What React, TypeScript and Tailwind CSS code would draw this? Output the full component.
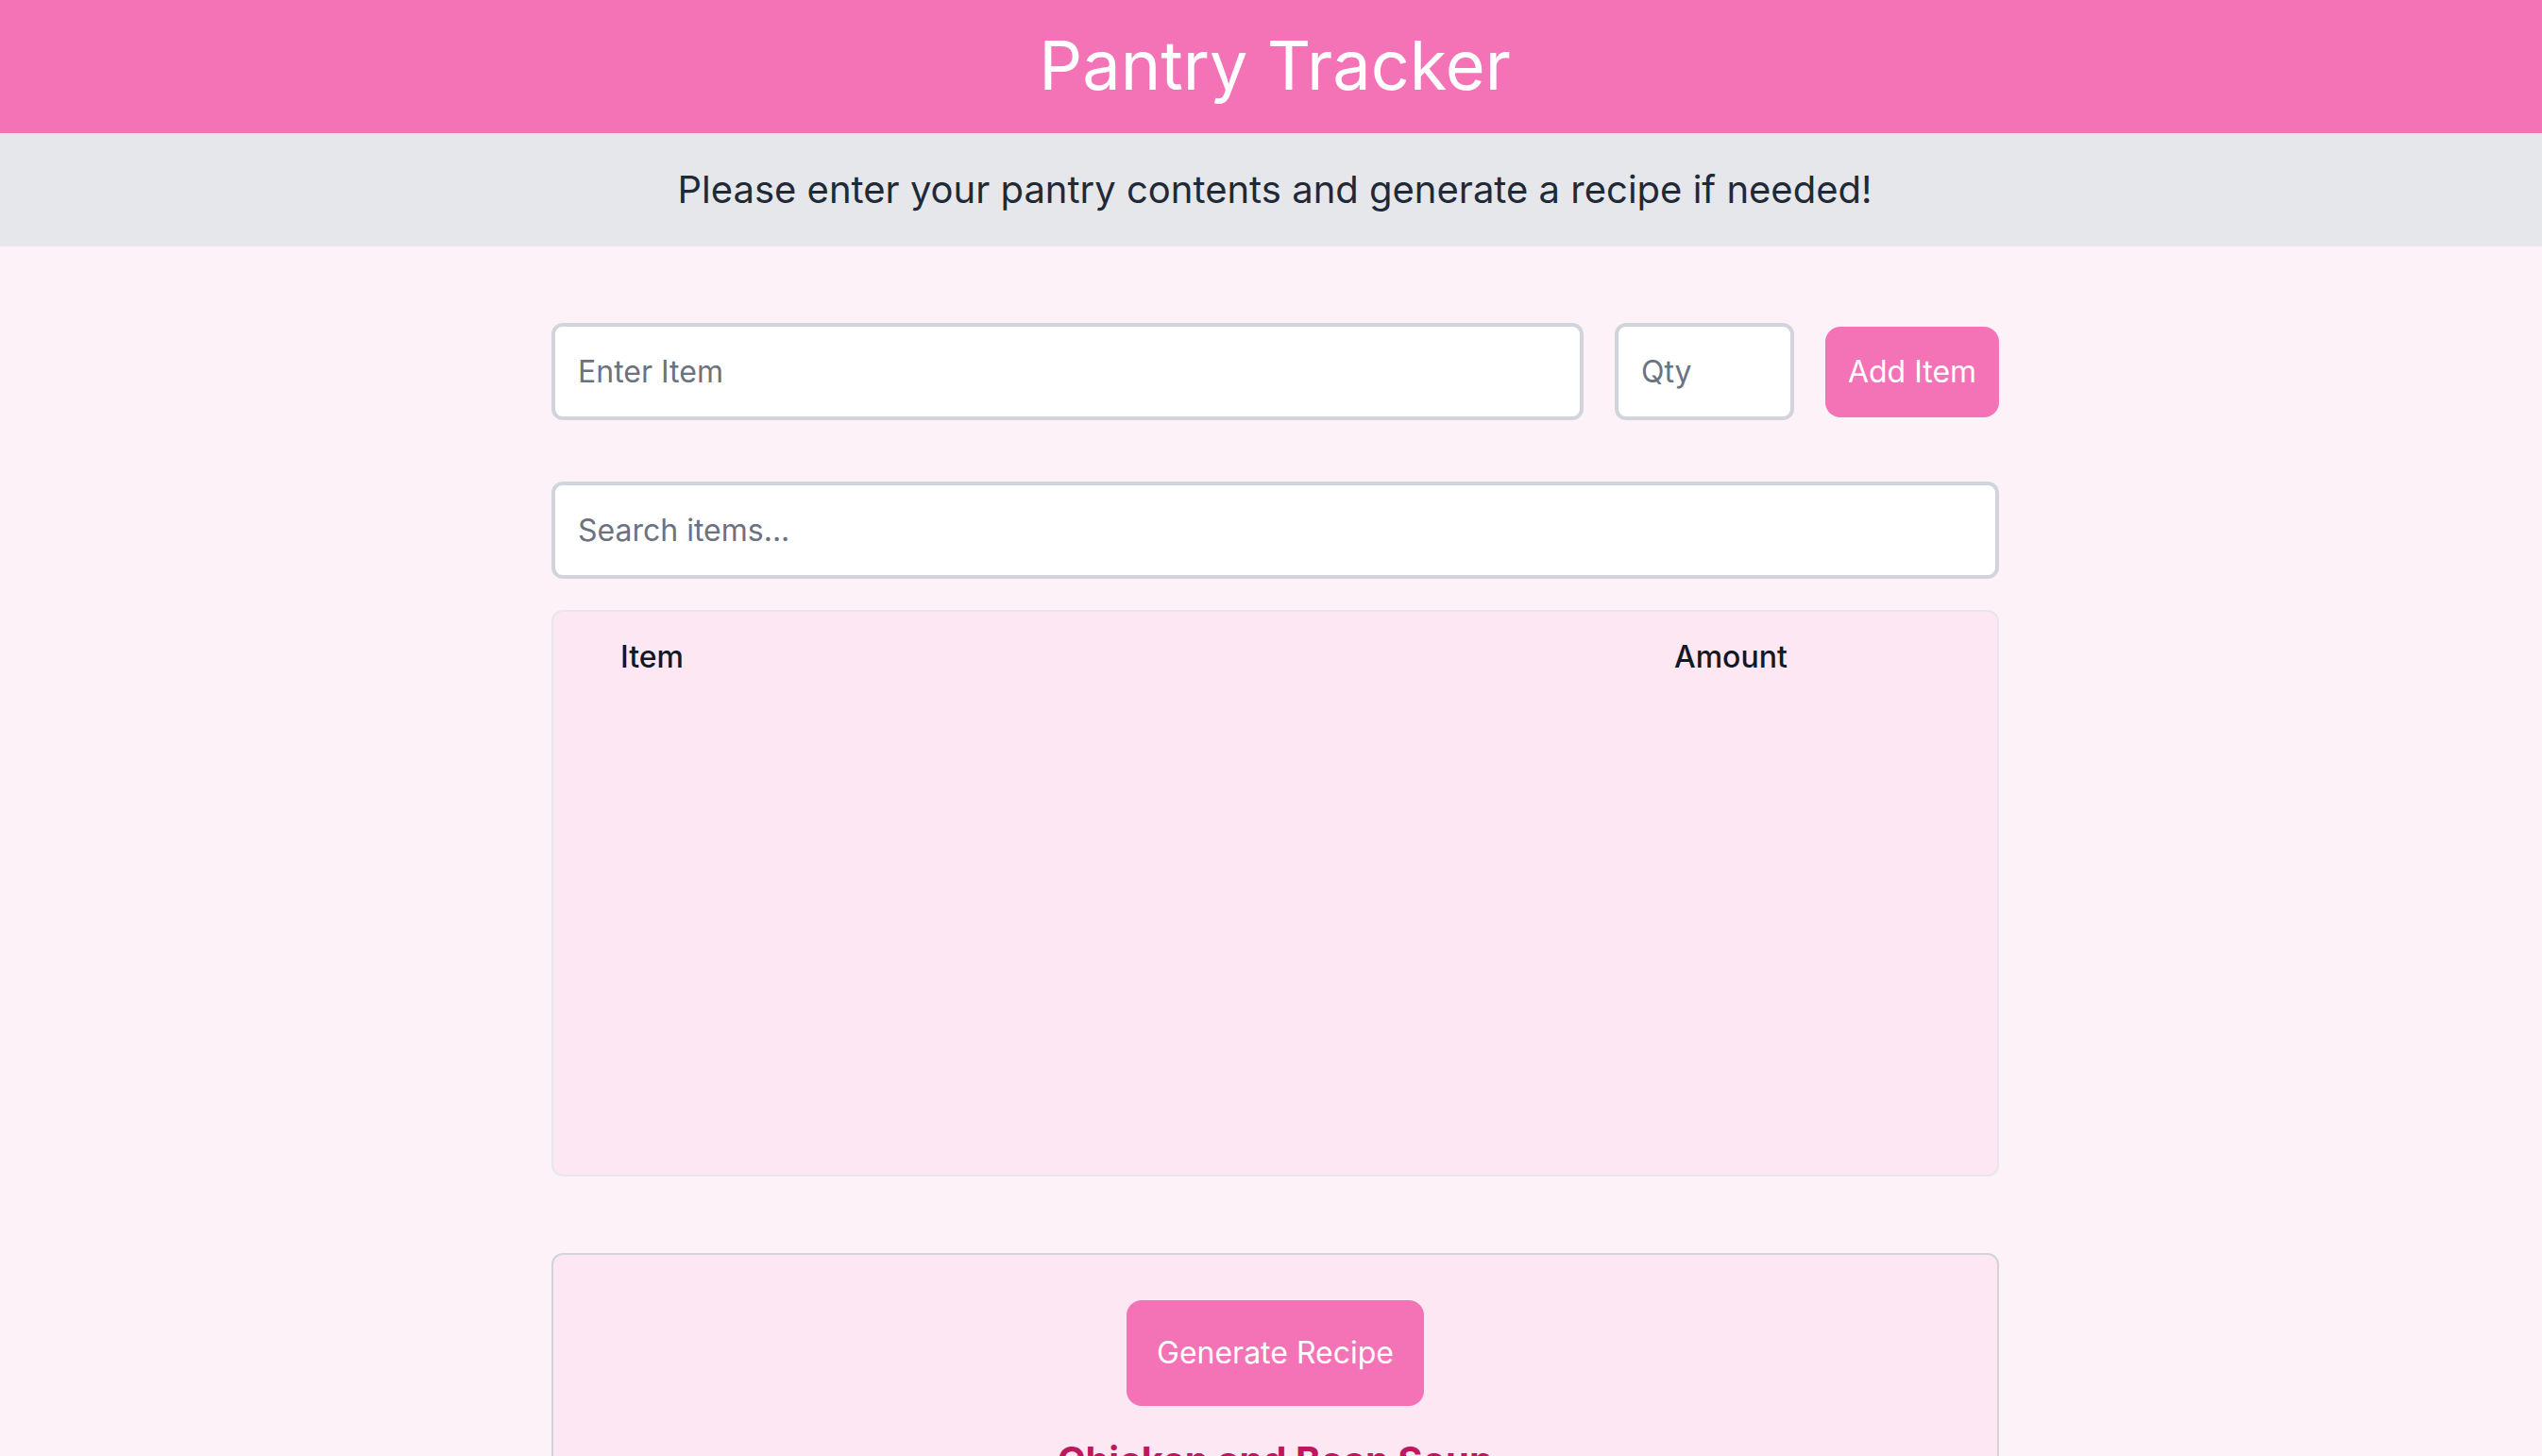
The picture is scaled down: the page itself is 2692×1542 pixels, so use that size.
import { useState } from "react";

export default function App() {
    const [item, setItem] = useState("");
    const [qty, setQty] = useState("");
    const [search, setSearch] = useState("");

    return (
        <div className="min-h-screen bg-[#fdf2f8] font-['Inter',sans-serif] text-[#1f2937]">
            <header className="h-[141px] pl-[8px] pb-[4px] bg-[#f472b6] flex items-center justify-center">
                <h1 className="text-[72px] leading-none text-white">Pantry Tracker</h1>
            </header>
            <div className="h-[120px] pl-[8px] bg-[#e5e7eb] flex items-center justify-center">
                <p className="text-[40px] leading-[56px] text-[#1f2937]">
                    Please enter your pantry contents and generate a recipe if needed!
                </p>
            </div>

            <main className="w-[1542px] mx-auto pl-[9px] pt-[81px]">
                <div className="flex items-center gap-[33px]">
                    <input
                        value={item}
                        onChange={(e) => setItem(e.target.value)}
                        placeholder="Enter Item"
                        className="flex-1 h-[103px] px-[24px] text-[32px] bg-white border-[4px] border-[#d1d5db] rounded-[12px] outline-none placeholder:text-[#6b7280]"
                    />
                    <input
                        value={qty}
                        onChange={(e) => setQty(e.target.value)}
                        placeholder="Qty"
                        className="w-[190px] h-[103px] px-[24px] text-[32px] bg-white border-[4px] border-[#d1d5db] rounded-[12px] outline-none placeholder:text-[#6b7280]"
                    />
                    <button className="w-[184px] h-[96px] text-[32px] text-white bg-[#f472b6] rounded-[16px]">
                        Add Item
                    </button>
                </div>

                <input
                    value={search}
                    onChange={(e) => setSearch(e.target.value)}
                    placeholder="Search items..."
                    className="mt-[65px] w-full h-[103px] px-[24px] text-[32px] bg-white border-[4px] border-[#d1d5db] rounded-[12px] outline-none placeholder:text-[#6b7280]"
                />

                <div className="mt-[33px] h-[600px] bg-[#fce7f3] border-2 border-[#e5e7eb] rounded-[12px] pt-[24px] overflow-auto">
                    <div className="flex pl-[71px] text-[32px] leading-[48px] font-medium text-[#111827]">
                        <div className="w-[1116px]">Item</div>
                        <div>Amount</div>
                    </div>
                </div>

                <div className="mt-[81px] bg-[#fce7f3] border-2 border-[#d1d5db] rounded-[12px] pt-[48px] pb-[48px] flex flex-col items-center">
                    <button className="h-[112px] px-[32px] text-[32px] text-white bg-[#f472b6] rounded-[16px]">
                        Generate Recipe
                    </button>
                    <h2 className="mt-[30px] text-[40px] leading-[56px] font-bold text-[#be185d]">
                        Chicken and Bean Soup
                    </h2>
                    <div className="h-[400px]" />
                </div>
            </main>
        </div>
    );
}
